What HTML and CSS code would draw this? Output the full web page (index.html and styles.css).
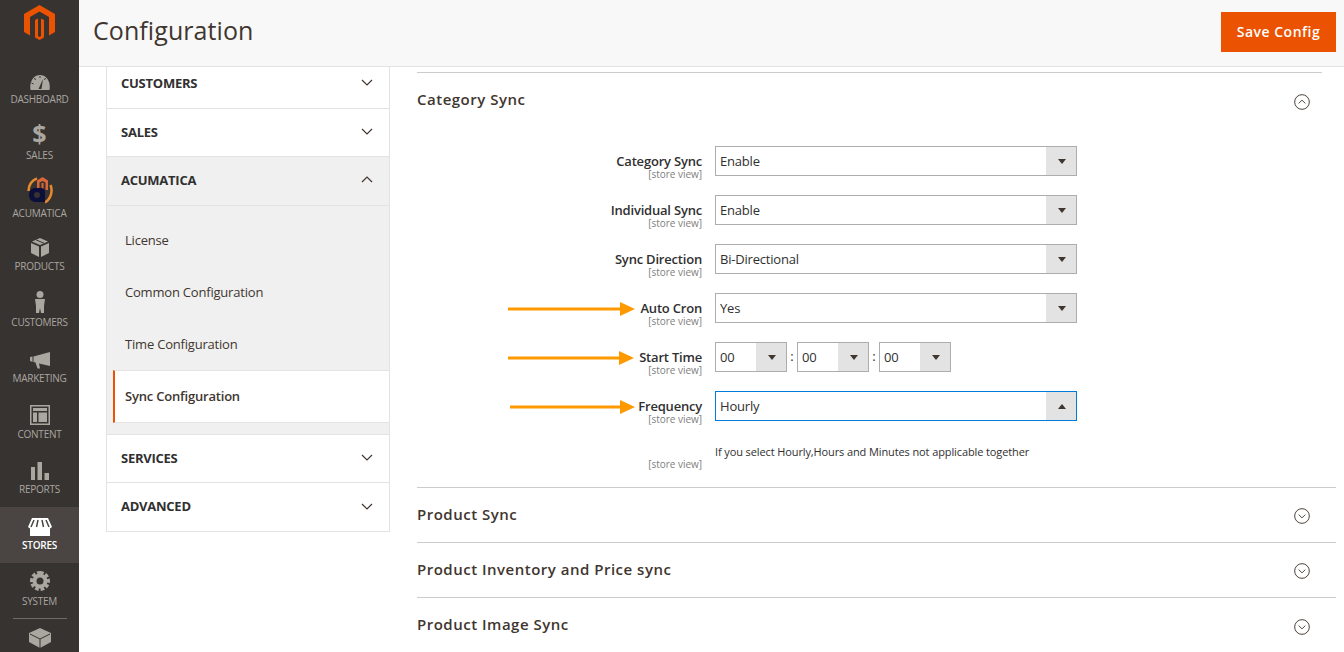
FILE: index.html
```html
<!DOCTYPE html>
<html lang="en">

<head>
    <meta charset="UTF-8">
    <title>Configuration</title>
    <link rel="stylesheet" href="styles.css">
</head>

<body>
    <nav class="sidebar">
        <div class="logo">
            <svg width="31" height="35" viewBox="0 0 31 35">
                <path fill="#eb5202" d="M15.500 0L31 9V27L25 30.500V12L15.500 6.500L6 12V30.500L0 27V9Z" />
                <path fill="#eb5202" d="M11 15L14 13.500V31L15.500 32L17 31V13.500L20 15V32.500L15.500 35L11 32.500Z" />
            </svg>
        </div>
        <a class="nav-item nav-dashboard">
            <svg width="20" height="15" viewBox="0 0 20 15">
                <path fill="#aaa6a0" d="M.5 15C-1 6 4 0 10 0S21 6 19.500 15Z" />
                <path fill="#373330" d="M8.500 14L13 4L11.500 14Z" />
                <path fill="none" stroke="#373330" d="M10 1V3M4.500 3L5.500 5M15.500 3L14.500 5M1.500 8L3.500 9" />
            </svg>
            <span>DASHBOARD</span>
        </a>
        <a class="nav-item nav-sales">
            <span class="dollar">$</span>
            <span>SALES</span>
        </a>
        <a class="nav-item nav-acumatica">
            <svg width="26" height="27" viewBox="0 0 26 27">
                <path fill="none" stroke="#e58a2e" stroke-width="2.500" d="M1.500 14C1.500 8 5 3 10 1.500" />
                <path fill="none" stroke="#e58a2e" stroke-width="2.500" d="M23.500 8C26 14 24 22 18 25.500" />
                <path fill="#d9653a" d="M15.500 0L21 3.500V13H18.500V5.500L15.500 4L12.500 5.500V13H10V3.500Z" />
                <path fill="#d9653a" d="M14.500 6H16.500V13H14.500Z" />
                <path fill="#0b0f3a" d="M9 11H14C16.500 11 18 12.500 18 15V25H9C5 25 2 22.500 2 18S5 11 9 11Z" />
                <rect x="7" y="15" width="6" height="6" rx="3" fill="#373330" />
            </svg>
            <span>ACUMATICA</span>
        </a>
        <a class="nav-item nav-products">
            <svg width="18" height="19" viewBox="0 0 18 19">
                <path fill="#aaa6a0" d="M9 0L17 3.500L9 7L1 3.500ZM0 5L8 8.500V19L0 15ZM18 5V15L10 19V8.500Z" />
                <path fill="none" stroke="#373330" d="M5 1.800L13 5.300" />
            </svg>
            <span>PRODUCTS</span>
        </a>
        <a class="nav-item nav-customers">
            <svg width="12" height="22" viewBox="0 0 12 22">
                <circle cx="6" cy="3.500" r="3.500" fill="#aaa6a0" />
                <path fill="#aaa6a0" d="M1 8H11L10 15V22H7L6 17L5 22H2V15Z" />
            </svg>
            <span>CUSTOMERS</span>
        </a>
        <a class="nav-item nav-marketing">
            <svg width="20" height="17" viewBox="0 0 20 17">
                <path fill="#aaa6a0" d="M20 0V14L9 11.500L10 16.500H7.500L5.500 10.500L3.500 10V4.500ZM0 5L2.500 4.500V10L0 9Z" />
            </svg>
            <span>MARKETING</span>
        </a>
        <a class="nav-item nav-content">
            <svg width="20" height="20" viewBox="0 0 20 20">
                <path fill="#aaa6a0" fill-rule="evenodd" d="M0 0H20V20H0ZM1.500 1.500V18.500H18.500V1.500Z" />
                <path fill="#aaa6a0" d="M3 3H17V6H3ZM3 7.500H7V17H3ZM8.500 7.500H17V17H8.500Z" />
            </svg>
            <span>CONTENT</span>
        </a>
        <a class="nav-item nav-reports">
            <svg width="18" height="18" viewBox="0 0 18 18">
                <path fill="#aaa6a0" d="M0 5H4V18H0ZM6.500 0H11V18H6.500ZM13.500 11H18V18H13.500Z" />
            </svg>
            <span>REPORTS</span>
        </a>
        <a class="nav-item nav-stores active">
            <svg width="24" height="18" viewBox="0 0 24 18">
                <path fill="#fff" d="M4 0H20L24 9L22 10.500V18H2V10.500L0 9Z" />
                <path fill="none" stroke="#4a4542" stroke-width="1.500" d="M6 2L3 9M10 2L8.500 9M14 2L15.500 9M18 2L21 9" />
            </svg>
            <span>STORES</span>
        </a>
        <a class="nav-item nav-system">
            <svg width="22" height="22" viewBox="0 0 22 22">
                <path fill="none" stroke="#aaa6a0" stroke-width="4" stroke-dasharray="3.500 1.700" d="M11 3A8 8 0 1 1 10.990 3" />
                <circle cx="11" cy="11" r="5.500" fill="none" stroke="#aaa6a0" stroke-width="4" />
            </svg>
            <span>SYSTEM</span>
        </a>
        <div class="nav-divider"></div>
        <a class="nav-item nav-extra">
            <svg width="22" height="20" viewBox="0 0 22 20">
                <path fill="#aaa6a0" d="M11 0L22 5V14L11 20L0 14V5Z" />
                <path fill="none" stroke="#373330" d="M1 6L11 11L21 6M11 11V20" />
            </svg>
        </a>
    </nav>

    <div class="workspace">
        <header class="page-header">
            <h1>Configuration</h1>
            <button class="save-btn">Save Config</button>
        </header>

        <div class="columns">
            <aside class="tabs">
                <div class="tab tab-first">
                    <span>CUSTOMERS</span>
                    <svg class="chev" width="12" height="7" viewBox="0 0 12 7"><path d="M1 1L6 6L11 1" /></svg>
                </div>
                <div class="tab">
                    <span>SALES</span>
                    <svg class="chev" width="12" height="7" viewBox="0 0 12 7"><path d="M1 1L6 6L11 1" /></svg>
                </div>
                <div class="tab tab-open">
                    <span>ACUMATICA</span>
                    <svg class="chev" width="12" height="7" viewBox="0 0 12 7"><path d="M1 6L6 1L11 6" /></svg>
                </div>
                <ul class="tab-items">
                    <li>License</li>
                    <li>Common Configuration</li>
                    <li>Time Configuration</li>
                    <li class="current">Sync Configuration</li>
                </ul>
                <div class="tab">
                    <span>SERVICES</span>
                    <svg class="chev" width="12" height="7" viewBox="0 0 12 7"><path d="M1 1L6 6L11 1" /></svg>
                </div>
                <div class="tab">
                    <span>ADVANCED</span>
                    <svg class="chev" width="12" height="7" viewBox="0 0 12 7"><path d="M1 1L6 6L11 1" /></svg>
                </div>
            </aside>

            <main class="main">
                <section class="section section-open">
                    <div class="section-head">
                        <h2>Category Sync</h2>
                        <svg class="circle-chev" width="16" height="16" viewBox="0 0 17 17">
                            <circle cx="8.500" cy="8.500" r="7.800" />
                            <path d="M5 10L8.500 6.500L12 10" />
                        </svg>
                    </div>

                    <div class="form-row">
                        <div class="label"><b>Category Sync</b><small>[store view]</small></div>
                        <div class="select"><span>Enable</span><i class="caret"></i></div>
                    </div>
                    <div class="form-row">
                        <div class="label"><b>Individual Sync</b><small>[store view]</small></div>
                        <div class="select"><span>Enable</span><i class="caret"></i></div>
                    </div>
                    <div class="form-row">
                        <div class="label"><b>Sync Direction</b><small>[store view]</small></div>
                        <div class="select"><span>Bi-Directional</span><i class="caret"></i></div>
                    </div>
                    <div class="form-row">
                        <svg class="arrow" width="127" height="14" viewBox="0 0 127 14"><path d="M0 5.500H112V0L127 7L112 14V8.500H0Z" /></svg>
                        <div class="label"><b>Auto Cron</b><small>[store view]</small></div>
                        <div class="select"><span>Yes</span><i class="caret"></i></div>
                    </div>
                    <div class="form-row">
                        <svg class="arrow" width="126" height="14" viewBox="0 0 126 14"><path d="M0 5.500H111V0L126 7L111 14V8.500H0Z" /></svg>
                        <div class="label"><b>Start Time</b><small>[store view]</small></div>
                        <div class="time">
                            <div class="select select-small"><span>00</span><i class="caret"></i></div>
                            <span class="colon">:</span>
                            <div class="select select-small"><span>00</span><i class="caret"></i></div>
                            <span class="colon">:</span>
                            <div class="select select-small"><span>00</span><i class="caret"></i></div>
                        </div>
                    </div>
                    <div class="form-row">
                        <svg class="arrow arrow-short" width="125" height="14" viewBox="0 0 125 14"><path d="M0 5.500H110V0L125 7L110 14V8.500H0Z" /></svg>
                        <div class="label"><b>Frequency</b><small>[store view]</small></div>
                        <div class="select select-focus"><span>Hourly</span><i class="caret caret-up"></i></div>
                    </div>
                    <div class="form-row note-row">
                        <div class="label"><small>[store view]</small></div>
                        <p class="note">If you select Hourly,Hours and Minutes not applicable together</p>
                    </div>
                </section>

                <section class="section">
                    <div class="section-head">
                        <h2>Product Sync</h2>
                        <svg class="circle-chev" width="16" height="16" viewBox="0 0 17 17">
                            <circle cx="8.500" cy="8.500" r="7.800" />
                            <path d="M5 7L8.500 10.500L12 7" />
                        </svg>
                    </div>
                </section>
                <section class="section">
                    <div class="section-head">
                        <h2>Product Inventory and Price sync</h2>
                        <svg class="circle-chev" width="16" height="16" viewBox="0 0 17 17">
                            <circle cx="8.500" cy="8.500" r="7.800" />
                            <path d="M5 7L8.500 10.500L12 7" />
                        </svg>
                    </div>
                </section>
                <section class="section">
                    <div class="section-head">
                        <h2>Product Image Sync</h2>
                        <svg class="circle-chev" width="16" height="16" viewBox="0 0 17 17">
                            <circle cx="8.500" cy="8.500" r="7.800" />
                            <path d="M5 7L8.500 10.500L12 7" />
                        </svg>
                    </div>
                </section>
            </main>
        </div>
    </div>
</body>

</html>
```

FILE: styles.css
```css
* {
    box-sizing: border-box;
}

html,
body {
    height: 652px;
    overflow: hidden;
}

body {
    display: flex;
    margin: 0;
    font-family: "Open Sans", sans-serif;
    color: #303030;
    background-color: #fff;
}

/* left admin menu */
.sidebar {
    flex: 0 0 79px;
    display: flex;
    flex-direction: column;
    height: 652px;
    background-color: #373330;
    overflow: hidden;
}

.logo {
    flex: none;
    height: 71px;
    padding: 5px 0 0 24px;
}

.nav-item {
    flex: none;
    display: flex;
    flex-direction: column;
    align-items: center;
    justify-content: flex-end;
    height: 56px;
    font-size: 10px;
    line-height: 14px;
    letter-spacing: -.25px;
    color: #aaa6a0;
}

.nav-item svg {
    display: block;
    margin-bottom: 2px;
}

.nav-dashboard {
    height: 35px;
}

.nav-acumatica {
    height: 58px;
}

.nav-products {
    height: 53px;
}

.nav-reports {
    height: 55px;
}

.nav-stores {
    height: 56px;
    padding-bottom: 11px;
    margin-top: 11px;
    color: #fff;
    font-weight: 600;
    background-color: #4a4542;
}

.nav-system {
    height: 45px;
}

.dollar {
    font-size: 25px;
    line-height: 26px;
    font-weight: 700;
    letter-spacing: 0;
    margin-bottom: 2px;
}

.nav-divider {
    flex: none;
    width: 54px;
    height: 1px;
    margin: 10px auto 0;
    background-color: #6f6b67;
}

.nav-extra {
    height: 34px;
    justify-content: flex-start;
    padding-top: 9px;
}

/* header */
.workspace {
    flex: 1;
    min-width: 0;
}

.page-header {
    display: flex;
    justify-content: space-between;
    align-items: flex-start;
    height: 67px;
    padding: 12px 8px 0 14px;
    background-color: #f8f8f8;
    border-bottom: 1px solid #e3e3e3;
}

h1 {
    margin: 0;
    font-size: 25px;
    line-height: 37px;
    font-weight: 400;
    letter-spacing: .08px;
    color: #41362f;
}

.save-btn {
    width: 115px;
    height: 40px;
    padding: 0 0 2px;
    border: none;
    font-family: inherit;
    font-size: 14px;
    font-weight: 600;
    letter-spacing: .5px;
    color: #fff;
    background-color: #eb5202;
}

.columns {
    display: flex;
    align-items: flex-start;
    padding-left: 27px;
}

/* config tabs */
.tabs {
    flex: 0 0 284px;
    border: 1px solid #e3e3e3;
    border-top: none;
}

.tab {
    display: flex;
    justify-content: space-between;
    align-items: center;
    height: 48px;
    padding: 0 16px 0 14px;
    font-size: 13px;
    font-weight: 700;
    letter-spacing: -.25px;
    border-bottom: 1px solid #e3e3e3;
}

.tab-first {
    height: 42px;
}

.tab span {
    position: relative;
    top: -1px;
}

.tab-first span {
    top: -5px;
}

.tab-open {
    height: 49px;
    background-color: #f0f0f0;
}

.tab:last-child {
    border-bottom: none;
}

.chev {
    position: relative;
    top: -1px;
    fill: none;
    stroke: #41362f;
    stroke-width: 1.200;
}

.tab-first .chev {
    top: -5px;
}

.tab-open .chev {
    top: -2px;
}

.tab-items {
    margin: 0;
    padding: 0 0 11px 6px;
    list-style: none;
    font-size: 13px;
    letter-spacing: -.2px;
    background-color: #f0f0f0;
    border-bottom: 1px solid #e3e3e3;
}

.tab-items li {
    height: 52px;
    padding: 17px 0 0 12px;
    line-height: 18px;
    color: #41362f;
}

.tab-items li:first-child {
    height: 60px;
    padding-top: 25px;
}

.tab-items .current {
    height: 53px;
    padding: 16px 0 0 10px;
    font-weight: 600;
    background-color: #fff;
    border-left: 2px solid #eb5202;
    border-top: 1px solid #e3e3e3;
    border-bottom: 1px solid #e3e3e3;
}

/* sections */
.main {
    flex: 0 0 919px;
    margin: 5px 0 0 27px;
}

.section {
    border-top: 1px solid #ccc;
    height: 55px;
}

.section-open {
    height: 415px;
    margin-right: 14px;
}

.section-head {
    display: flex;
    justify-content: space-between;
    align-items: center;
    height: 54px;
    padding-right: 26px;
}

h2 {
    position: relative;
    top: -1px;
    margin: 0;
    font-size: 15px;
    line-height: 20px;
    font-weight: 600;
    letter-spacing: .5px;
    color: #41362f;
}

.section-open .section-head {
    align-items: flex-start;
    height: 73px;
    padding: 17px 12px 0 0;
}

.circle-chev {
    position: relative;
    top: 1px;
    fill: none;
    stroke: #41362f;
    stroke-width: 1;
}

.section-open .circle-chev {
    top: 4px;
}

.section:last-child .circle-chev {
    top: 2px;
}

/* form rows */
.form-row {
    position: relative;
    display: flex;
    height: 30px;
    margin-bottom: 19px;
}

.label {
    flex: 0 0 285px;
    padding-top: 8px;
    text-align: right;
}

.label b {
    display: block;
    font-size: 13px;
    line-height: 14px;
    font-weight: 600;
    letter-spacing: -.2px;
}

.label small {
    display: block;
    font-size: 10px;
    line-height: 12px;
    letter-spacing: -.03px;
    color: #808080;
}

.select {
    position: relative;
    display: flex;
    align-items: center;
    width: 362px;
    height: 30px;
    margin-left: 13px;
    padding-left: 4px;
    font-size: 13px;
    letter-spacing: -.2px;
    color: #303030;
    border: 1px solid #adadad;
    background-color: #fff;
}

.caret {
    position: absolute;
    top: 0;
    right: 0;
    bottom: 0;
    width: 30px;
    background-color: #e3e3e3;
}

.caret::after {
    content: "";
    position: absolute;
    top: 12px;
    left: 12px;
    border-left: 4px solid transparent;
    border-right: 4px solid transparent;
    border-top: 5px solid #41362f;
}

.caret-up::after {
    border-top: none;
    border-bottom: 5px solid #41362f;
}

.select-focus {
    border-color: #007bdb;
}

.time {
    display: flex;
    margin-left: 13px;
}

.select-small {
    width: 72px;
    margin-left: 0;
}

.colon {
    width: 10px;
    font-size: 13px;
    line-height: 28px;
    text-align: center;
}

.note-row {
    margin: 0;
    padding-top: 4px;
    height: auto;
}

.note-row .label {
    padding-top: 14px;
}

.note {
    margin: 0 0 0 13px;
    font-size: 11px;
    line-height: 16px;
    letter-spacing: -.11px;
}

.arrow {
    position: absolute;
    top: 9px;
    left: 91px;
    fill: #f90;
}

.arrow-short {
    left: 93px;
}
```
